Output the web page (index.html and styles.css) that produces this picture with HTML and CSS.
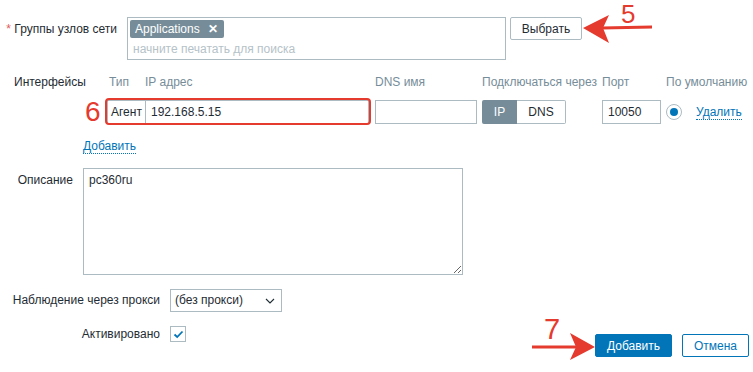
FILE: index.html
```html
<!DOCTYPE html>
<html lang="ru">
<head>
<meta charset="utf-8">
<title>Host</title>
<link rel="stylesheet" href="styles.css">
</head>
<body>
<div class="page">
  <div class="row row-groups">
    <div class="lbl lbl-groups"><span class="req">*</span> Группы узлов сети</div>
    <div class="multiselect">
      <div class="tags"><span class="tag">Applications<span class="tag-x">✕</span></span></div>
      <div class="ph">начните печатать для поиска</div>
    </div>
    <button class="btn-alt">Выбрать</button>
  </div>

  <div class="ifaces">
    <div class="lbl lbl-if">Интерфейсы</div>
    <div class="th th-type">Тип</div>
    <div class="th">IP адрес</div>
    <div class="th">DNS имя</div>
    <div class="th">Подключаться через</div>
    <div class="th">Порт</div>
    <div class="th">По умолчанию</div>
    <div class="th"></div>

    <div></div>
    <div class="type-box">Агент</div>
    <div class="cell"><div class="inp inp-ip">192.168.5.15</div></div>
    <div class="cell"><div class="inp inp-dns"></div></div>
    <div class="cell"><div class="seg"><span class="seg-on">IP</span><span class="seg-off">DNS</span></div></div>
    <div class="cell"><div class="inp inp-port">10050</div></div>
    <div class="cell"><span class="radio"><span class="radio-dot"></span></span></div>
    <div class="cell"><a class="link">Удалить</a></div>
  </div>

  <div class="add-row"><a class="link">Добавить</a></div>

  <div class="row row-desc">
    <div class="lbl lbl-desc">Описание</div>
    <textarea class="desc">pc360ru</textarea>
  </div>

  <div class="row row-proxy">
    <div class="lbl lbl-proxy">Наблюдение через прокси</div>
    <div class="select">(без прокси)
      <svg class="chev" width="10" height="6" viewBox="0 0 10 6"><path d="M1 1 L5 5 L9 1" fill="none" stroke="#1f2c33" stroke-width="1.1"/></svg>
    </div>
  </div>

  <div class="row row-last">
    <div class="lbl lbl-proxy lbl-act">Активировано</div>
    <div class="check">
      <svg width="13" height="13" viewBox="0 0 13 13"><path d="M2.5 6.5 L5.2 9 L10.5 3.5" fill="none" stroke="#0275b8" stroke-width="1.8"/></svg>
    </div>
    <div class="actions">
      <button class="btn-main">Добавить</button>
      <button class="btn-cancel">Отмена</button>
    </div>
  </div>

  <div class="mark mark-box"></div>
  <div class="num num5">5</div>
  <div class="num num6">6</div>
  <div class="num num7">7</div>
  <svg class="arrow arrow5" width="80" height="34" viewBox="0 0 80 34">
    <path d="M20 11.5 L70 10.5 L70 13.5 L20 14.5 Z" fill="#e53a2e"/>
    <path d="M1 13 L27 0 L21 13 L27 28 Z" fill="#e53a2e"/>
  </svg>
  <svg class="arrow arrow7" width="70" height="30" viewBox="0 0 70 30">
    <path d="M0 13.5 L45 13.5 L45 16.5 L0 16.5 Z" fill="#e53a2e"/>
    <path d="M63 15 L38 1 L44 15 L38 28 Z" fill="#e53a2e"/>
  </svg>
</div>
</body>
</html>
```

FILE: styles.css
```css
* { box-sizing: border-box; }
html, body { margin: 0; padding: 0; background: #fff; }
body {
  font-family: "Liberation Sans", Arial, sans-serif;
  font-size: 12px;
  color: #1f2c33;
}
.page {
  position: relative;
  width: 753px;
  height: 372px;
  padding-top: 17px;
  overflow: hidden;
}
.row { display: flex; align-items: flex-start; }
.lbl { text-align: right; flex: none; }
.req { color: #e45959; }

.lbl-groups { width: 117px; line-height: 24px; margin-right: 10px; }
.multiselect {
  width: 379px;
  height: 43px;
  border: 1px solid #acbbc2;
  padding: 2px 2px 0 2px;
}
.tags { height: 19px; }
.tag {
  display: inline-flex;
  align-items: center;
  height: 18px;
  background: #768d99;
  color: #fff;
  padding: 0 6px 0 5px;
  border-radius: 2px;
}
.tag-x { margin-left: 8px; font-size: 12px; font-weight: bold; }
.ph { color: #b5c2c8; line-height: 20px; padding-left: 3px; }
.btn-alt {
  margin-left: 4px;
  width: 72px;
  height: 23px;
  background: #fff;
  border: 1px solid #acbbc2;
  border-radius: 2px;
  font: inherit;
  color: #1f2c33;
  padding: 0;
}

.ifaces {
  margin-top: 14px;
  display: grid;
  grid-template-columns: 107px 38px 230px 107px 120px 64px 30px auto;
  grid-template-rows: 16px 24px;
  row-gap: 10px;
  line-height: 16px;
}
.lbl-if { text-align: left; padding-left: 14px; }
.th { color: #768d99; white-space: nowrap; }
.th-type { padding-left: 2px; }
.type-box {
  height: 24px;
  line-height: 22px;
  border: 1px solid #acbbc2;
  border-right: none;
  padding-left: 3px;
}
.cell { display: flex; align-items: center; height: 24px; }
.inp {
  height: 24px;
  border: 1px solid #acbbc2;
  line-height: 22px;
  padding-left: 5px;
}
.inp-ip { width: 224px; }
.inp-dns { width: 102px; }
.inp-port { width: 59px; }
.seg { display: flex; height: 24px; }
.seg span { display: flex; align-items: center; justify-content: center; }
.seg-on {
  width: 35px;
  background: #768d99;
  color: #fff;
  border-radius: 2px 0 0 2px;
}
.seg-off {
  width: 49px;
  border: 1px solid #acbbc2;
  border-left: none;
  border-radius: 0 2px 2px 0;
}
.radio {
  width: 16px;
  height: 16px;
  border: 1px solid #acbbc2;
  border-radius: 50%;
  display: flex;
  align-items: center;
  justify-content: center;
}
.radio-dot { width: 8px; height: 8px; border-radius: 50%; background: #0275b8; }
.link {
  color: #0275b8;
  border-bottom: 1px dotted #0275b8;
  line-height: 14px;
  cursor: pointer;
}

.add-row { margin-top: 14px; padding-left: 83px; height: 16px; line-height: 16px; }

.row-desc { margin-top: 14px; }
.lbl-desc { width: 73px; margin-right: 10px; padding-top: 4px; line-height: 16px; }
.desc {
  width: 380px;
  height: 107px;
  border: 1px solid #acbbc2;
  font: 12px "Liberation Sans", Arial, sans-serif;
  color: #1f2c33;
  padding: 4px 5px;
  margin: 0;
  display: block;
}

.row-proxy { margin-top: 14px; }
.lbl-proxy { width: 160px; margin-right: 10px; line-height: 23px; }
.select {
  width: 112px;
  height: 23px;
  border: 1px solid #acbbc2;
  line-height: 21px;
  padding-left: 4px;
  display: flex;
  align-items: center;
  justify-content: space-between;
  padding-right: 6px;
}

.row-last { margin-top: 14px; }
.lbl-act { line-height: 17px; }
.check {
  width: 16px;
  height: 16px;
  border: 1px solid #acbbc2;
  display: flex;
  align-items: center;
  justify-content: center;
}
.actions { margin-left: auto; margin-right: 4px; margin-top: 8px; display: flex; gap: 10px; }
.btn-main, .btn-cancel {
  height: 23px;
  font: inherit;
  border-radius: 2px;
  padding: 0;
}
.btn-main { width: 77px; background: #0275b8; border: 1px solid #0275b8; color: #fff; }
.btn-cancel { width: 67px; background: #fff; border: 1px solid #0275b8; color: #0275b8; }

/* annotations overlay */
.mark-box {
  position: absolute;
  left: 105px;
  top: 98px;
  width: 266px;
  height: 27px;
  border: 2px solid #e53a2e;
  border-radius: 4px;
}
.num {
  position: absolute;
  color: #e53a2e;
  font-family: "Liberation Sans", Arial, sans-serif;
  line-height: 1.1;
}
.num5 { left: 621px; top: 0px; font-size: 26px; }
.num6 { left: 85px; top: 97px; font-size: 28px; }
.num7 { left: 544px; top: 314px; font-size: 29px; }
.arrow { position: absolute; }
.arrow5 { left: 582px; top: 15px; }
.arrow7 { left: 532px; top: 332px; }
```
